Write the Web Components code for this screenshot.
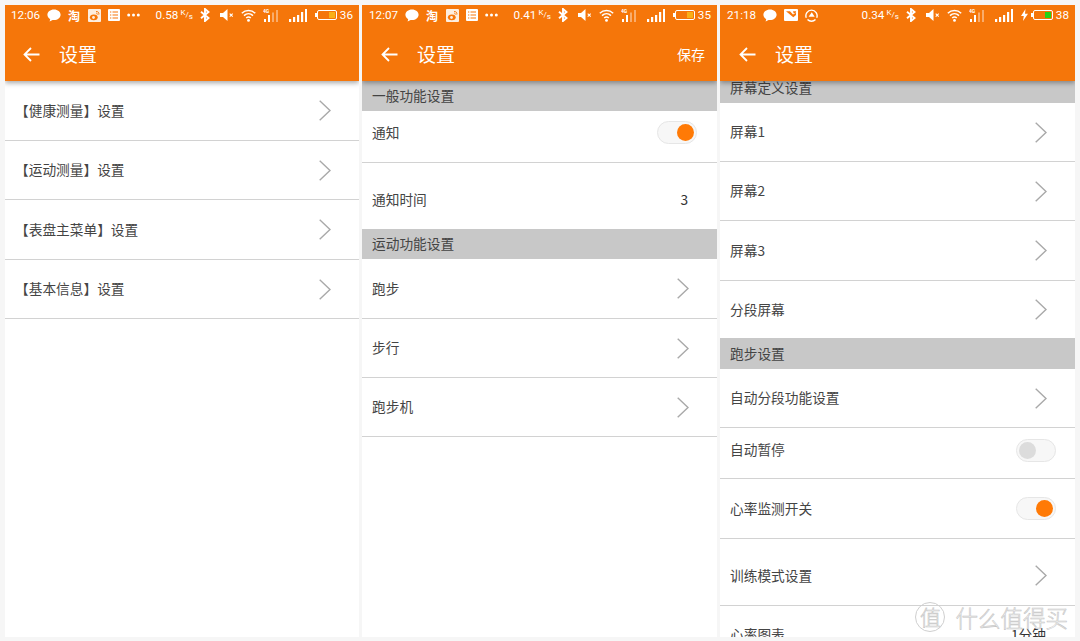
<!DOCTYPE html>
<html lang="zh">
<head>
<meta charset="utf-8">
<title>设置</title>
<style>
html, body { margin: 0; height: 100%; }
body {
  width: 1080px;
  height: 641px;
  overflow: hidden;
  background: #f6f6f6;
  font-family: "Noto Sans CJK SC", "Noto Sans", sans-serif;
}
.screens {
  display: grid;
  grid-template-columns: 354px 355px 355px;
  column-gap: 3px;
  padding: 5px 0 0 5px;
  height: 637px;
  box-sizing: border-box;
}
</style>
</head>
<body>
<div class="screens">
  <phone-screen>
    <status-bar slot="top" time="12:06" speed="0.58" level="36">
      <ic-bubble></ic-bubble><ic-tao></ic-tao><ic-weibo></ic-weibo><ic-list></ic-list><ic-dots></ic-dots>
    </status-bar>
    <app-bar slot="top"></app-bar>
    <setting-row h="60" line chevron>【健康测量】设置</setting-row>
    <setting-row h="59" line chevron>【运动测量】设置</setting-row>
    <setting-row h="60" line chevron>【表盘主菜单】设置</setting-row>
    <setting-row h="59" line chevron>【基本信息】设置</setting-row>
  </phone-screen>

  <phone-screen style="--inset:1px">
    <status-bar slot="top" time="12:07" speed="0.41" level="35">
      <ic-bubble></ic-bubble><ic-tao></ic-tao><ic-weibo></ic-weibo><ic-list></ic-list><ic-dots></ic-dots>
    </status-bar>
    <app-bar slot="top" action="保存"></app-bar>
    <section-head h="30">一般功能设置</section-head>
    <setting-row h="52" line shift="-4">通知<toggle-switch slot="end" on></toggle-switch></setting-row>
    <setting-row h="66" value="3" shift="3.5">通知时间</setting-row>
    <section-head h="30">运动功能设置</section-head>
    <setting-row h="60" line chevron>跑步</setting-row>
    <setting-row h="59" line chevron>步行</setting-row>
    <setting-row h="59" line chevron>跑步机</setting-row>
  </phone-screen>

  <phone-screen style="--inset:1px">
    <status-bar slot="top" time="21:18" speed="0.34" level="38" charging>
      <ic-bubble></ic-bubble><ic-photo></ic-photo><ic-ring></ic-ring>
    </status-bar>
    <app-bar slot="top"></app-bar>
    <section-head h="22" shift="-4">屏幕定义设置</section-head>
    <setting-row h="59" line chevron>屏幕1</setting-row>
    <setting-row h="59" line chevron>屏幕2</setting-row>
    <setting-row h="60" line chevron>屏幕3</setting-row>
    <setting-row h="57" chevron>分段屏幕</setting-row>
    <section-head h="31">跑步设置</section-head>
    <setting-row h="59" line chevron>自动分段功能设置</setting-row>
    <setting-row h="51" line shift="-3">自动暂停<toggle-switch slot="end" style="margin-right:-1px"></toggle-switch></setting-row>
    <setting-row h="60" line>心率监测开关<toggle-switch slot="end" on style="margin-right:-1px"></toggle-switch></setting-row>
    <setting-row h="67" line shift="3.5" chevron>训练模式设置</setting-row>
    <setting-row h="60" value="1分钟" shift="-1">心率图表</setting-row>
    <water-mark></water-mark>
  </phone-screen>
</div>

<script>
// small helper, every icon is just an svg inside a shadow root
function defineIcon(name, w, h, box, body) {
  customElements.define(name, class extends HTMLElement {
    constructor() {
      super();
      this.attachShadow({ mode: 'open' }).innerHTML =
        '<style>:host{display:block;width:' + w + 'px;height:' + h + 'px;flex:none}svg{display:block}</style>' +
        '<svg width="' + w + '" height="' + h + '" viewBox="' + box + '">' + body + '</svg>';
    }
  });
}

defineIcon('ic-bubble', 14, 13, '0 0 14 13',
  '<path d="M7 .5C3.300.5.400 2.800.400 5.800c0 1.800 1.100 3.400 2.800 4.400L2.600 12.600 5.600 11c.5.100.900.100 1.400.100 3.700 0 6.600-2.300 6.600-5.300S10.700.5 7 .5Z" fill="#fff"/>');
defineIcon('ic-weibo', 13, 13, '0 0 13 13',
  '<rect width="13" height="13" rx="1" fill="#fdeee0"/><ellipse cx="5.800" cy="8.300" rx="3.900" ry="2.900" fill="#f7770a"/><circle cx="5.500" cy="8.500" r="1.400" fill="#fdeee0"/><path d="M8 2.600c2-.4 3.300 1.100 2.800 3M8.300 4.300c.8-.1 1.200.5 1 1.200" fill="none" stroke="#f7770a" stroke-width="1"/>');
defineIcon('ic-list', 12, 12, '0 0 12 12',
  '<rect width="12" height="12" rx="1" fill="#fff"/><path d="M2 3h1.300M2 6h1.300M2 9h1.300M4.500 3H10M4.500 6H10M4.500 9H10" stroke="#f7770a" stroke-width="1.200"/>');
defineIcon('ic-dots', 13, 4, '0 0 13 4',
  '<circle cx="1.700" cy="2" r="1.500" fill="#fff"/><circle cx="6.500" cy="2" r="1.500" fill="#fff"/><circle cx="11.300" cy="2" r="1.500" fill="#fff"/>');
defineIcon('ic-photo', 14, 12, '0 0 14 12',
  '<rect width="14" height="12" rx="1" fill="#fff"/><path d="M2 2.200h4l3 3.300 3-1.700V6L9.300 8.300Z" fill="#f7770a"/><path d="M9 2.200h3v1.200L9.800 4.600Z" fill="#f7770a"/>');
defineIcon('ic-ring', 13, 13, '0 0 13 13',
  '<path d="M1.300 8.800A5.600 5.600 0 1 1 11.700 8.800M2.500 10.600A5.600 5.600 0 0 0 10.500 10.600" fill="none" stroke="#fff" stroke-width="1.400"/><path d="M6.800 3.200 9.700 7.800H3.600Z" fill="#fff"/>');
defineIcon('ic-bluetooth', 10, 14, '0 0 10 14',
  '<path d="M1 3.800 8.500 10 5 13V1l3.500 3L1 10.200" fill="none" stroke="#fff" stroke-width="1.900"/>');
defineIcon('ic-mute', 14, 12, '0 0 14 12',
  '<path d="M0 4h3L7.500 0v12L3 8H0Z" fill="#fff"/><path d="M9.700 4.700 12.700 7.700M12.700 4.700 9.700 7.700" stroke="#fff" stroke-width="1.100"/>');
defineIcon('ic-wifi', 15, 13, '0 0 15 13',
  '<path d="M.8 4.200C4.600.7 10.400.7 14.200 4.200M3 6.600C5.600 4.200 9.400 4.200 12 6.600M5.200 9C6.500 7.800 8.500 7.800 9.800 9" fill="none" stroke="#fff" stroke-width="1.500"/><circle cx="7.500" cy="11.400" r="1.400" fill="#fff"/>');
defineIcon('ic-signal-4g', 18, 14, '0 0 18 14',
  '<text x="0" y="4.500" font-size="5" font-family="Roboto" font-weight="700" fill="#fff">4G</text>' +
  '<path d="M1 14v-3h2v3ZM5 14V7h2v7Z" fill="#fff"/><path d="M9 14V4.500h2V14ZM13 14V2h2v12Z" fill="#fff" opacity=".4"/>');
defineIcon('ic-signal', 18, 13, '0 0 18 13',
  '<path d="M0 13v-3h2.200v3ZM4 13V8h2.200v5ZM8 13V6h2.200v7ZM12 13V3h2.200v10ZM16 13V0h2.200v13Z" fill="#fff"/>');
defineIcon('ic-bolt', 7, 12, '0 0 7 12',
  '<path d="M4.500 0 0 7h2.800L2 12l5-7.300H4Z" fill="#fff"/>');

const status_template = document.createElement('template');
status_template.innerHTML = `
<style>
:host {
  display: flex;
  align-items: center;
  height: 20px;
  padding: 0 6px 0 calc(6px + var(--inset, 0px));
  color: #fff;
  font: 11.7px Roboto, sans-serif;
  white-space: nowrap;
}
.left, .right { display: flex; align-items: center; }
.left { gap: 7px; }
.right { margin-left: auto; }
.unit { display: flex; font-size: 8px; line-height: 8px; margin: 0 7px 0 2px; }
.unit b { font-weight: 400; }
.unit b:first-child { position: relative; top: -2px; }
.unit b:last-child { position: relative; top: 2px; }
ic-bluetooth { margin-right: 10px; }
ic-mute { margin-right: 7px; }
ic-wifi { margin-right: 7px; }
ic-signal-4g { margin-right: 8px; }
ic-signal { margin-right: 8px; }
ic-bolt { margin-right: 3px; }
.battery {
  position: relative;
  width: 20px;
  height: 10px;
  border: 1px solid #fff;
  border-radius: 2px;
  box-sizing: border-box;
  margin: 0 3px 0 2px;
}
.battery::before {
  content: "";
  position: absolute;
  left: -3px;
  top: 2px;
  width: 2px;
  height: 4px;
  background: #fff;
}
.fill {
  position: absolute;
  right: 1px;
  top: 1px;
  bottom: 1px;
  width: 6px;
  background: #f9b017;
}
:host([charging]) .fill { background: #27d414; }
</style>
<div class="left">
  <span id="time"></span>
  <slot></slot>
</div>
<div class="right">
  <span id="speed"></span><span class="unit"><b>K</b><b>/</b><b>s</b></span>
  <ic-bluetooth></ic-bluetooth>
  <ic-mute></ic-mute>
  <ic-wifi></ic-wifi>
  <ic-signal-4g></ic-signal-4g>
  <ic-signal></ic-signal>
  <ic-bolt id="bolt"></ic-bolt>
  <span class="battery"><span class="fill"></span></span>
  <span id="level"></span>
</div>
`;
class StatusBar extends HTMLElement {
  constructor() {
    super();
    this.attachShadow({ mode: 'open' });
    this.shadowRoot.appendChild(status_template.content.cloneNode(true));
    this.shadowRoot.querySelector('#time').textContent = this.getAttribute('time');
    this.shadowRoot.querySelector('#speed').textContent = this.getAttribute('speed');
    this.shadowRoot.querySelector('#level').textContent = this.getAttribute('level');
    if (!this.hasAttribute('charging')) {
      this.shadowRoot.querySelector('#bolt').remove();
    }
  }
}
customElements.define('status-bar', StatusBar);

// the taobao mark is a character in the real bar too
customElements.define('ic-tao', class extends HTMLElement {
  constructor() {
    super();
    this.attachShadow({ mode: 'open' }).innerHTML =
      '<style>:host{display:block;width:13px;font:700 12px/13px "Noto Sans CJK SC",sans-serif;color:#fff}</style>淘';
  }
});

const appbar_template = document.createElement('template');
appbar_template.innerHTML = `
<style>
:host {
  display: flex;
  align-items: center;
  height: 56px;
  padding: 2px 12px 0 calc(18px + var(--inset, 0px));
  box-sizing: border-box;
  color: #fff;
}
svg { display: block; flex: none; }
h1 { margin: 0 0 0 19px; font: 400 19px/26px "Noto Sans CJK SC", sans-serif; }
#action { margin-left: auto; font-size: 14px; }
</style>
<svg width="17" height="15" viewBox="0 0 17 15"><path d="M16.500 7.500H1.500M8 1 1.500 7.500 8 14" fill="none" stroke="#fff" stroke-width="1.800"/></svg>
<h1>设置</h1>
<span id="action"></span>
`;
class AppBar extends HTMLElement {
  constructor() {
    super();
    this.attachShadow({ mode: 'open' });
    this.shadowRoot.appendChild(appbar_template.content.cloneNode(true));
    this.shadowRoot.querySelector('#action').textContent = this.getAttribute('action') || '';
  }
}
customElements.define('app-bar', AppBar);

const screen_template = document.createElement('template');
screen_template.innerHTML = `
<style>
:host {
  display: block;
  position: relative;
  background: #fff;
  overflow: hidden;
  font: 13.7px "Noto Sans CJK SC", sans-serif;
  color: #444;
}
.top {
  position: relative;
  z-index: 2;
  background: #f5760a;
  height: 76px;
  box-shadow: 0 2px 5px rgba(0,0,0,.35);
}
</style>
<div class="top"><slot name="top"></slot></div>
<div class="body"><slot></slot></div>
`;
class PhoneScreen extends HTMLElement {
  constructor() {
    super();
    this.attachShadow({ mode: 'open' });
    this.shadowRoot.appendChild(screen_template.content.cloneNode(true));
  }
}
customElements.define('phone-screen', PhoneScreen);

const head_template = document.createElement('template');
head_template.innerHTML = `
<style>
:host {
  display: flex;
  align-items: center;
  box-sizing: border-box;
  padding-left: 10px;
  background: #c8c8c8;
  color: #444;
  white-space: nowrap;
  overflow: hidden;
}
#label { margin-top: -2px; }
</style>
<span id="label"><slot></slot></span>
`;
class SectionHead extends HTMLElement {
  constructor() {
    super();
    this.attachShadow({ mode: 'open' });
    this.shadowRoot.appendChild(head_template.content.cloneNode(true));
    this.style.height = this.getAttribute('h') + 'px';
    const shift = this.getAttribute('shift');
    if (shift) {
      this.shadowRoot.querySelector('#label').style.marginTop = (shift * 2 - 2) + 'px';
    }
  }
}
customElements.define('section-head', SectionHead);

const row_template = document.createElement('template');
row_template.innerHTML = `
<style>
:host {
  display: flex;
  align-items: center;
  justify-content: space-between;
  box-sizing: border-box;
  padding: 0 20px 0 10px;
  color: #444;
  white-space: nowrap;
  overflow: hidden;
}
:host([line]) { border-bottom: 1px solid #d2d2d2; }
#label { margin-top: -2px; }
#value { margin: -2px 9px 0 0; color: #333; line-height: 14px; }
svg { display: block; margin-right: 8px; }
</style>
<span id="label"><slot></slot></span>
<slot name="end"></slot>
`;
class SettingRow extends HTMLElement {
  constructor() {
    super();
    this.attachShadow({ mode: 'open' });
    this.shadowRoot.appendChild(row_template.content.cloneNode(true));
    this.style.height = this.getAttribute('h') + 'px';
    const root = this.shadowRoot;
    const shift = Number(this.getAttribute('shift') || 0);
    if (shift > 0) this.style.paddingTop = (shift * 2) + 'px';
    if (shift < 0) this.style.paddingBottom = (-shift * 2) + 'px';
    if (this.hasAttribute('chevron')) {
      root.appendChild(document.createRange().createContextualFragment(
        '<svg width="12" height="21" viewBox="0 0 12 21"><path d="M.7.7 11 10.500.7 20.300" fill="none" stroke="#a9a9a9" stroke-width="1.400"/></svg>'));
    }
    if (this.getAttribute('value')) {
      const v = document.createElement('span');
      v.id = 'value';
      v.textContent = this.getAttribute('value');
      root.appendChild(v);
    }
  }
}
customElements.define('setting-row', SettingRow);

const toggle_template = document.createElement('template');
toggle_template.innerHTML = `
<style>
:host {
  display: block;
  position: relative;
  width: 40px;
  height: 23px;
  box-sizing: border-box;
  border: 1px solid #e6e6e6;
  border-radius: 12px;
  background: #f7f7f7;
  flex: none;
}
i {
  position: absolute;
  top: 2px;
  left: 2px;
  width: 17px;
  height: 17px;
  border-radius: 50%;
  background: #dcdcdc;
}
:host([on]) i { left: auto; right: 2px; background: #ff7a06; }
</style>
<i></i>
`;
class ToggleSwitch extends HTMLElement {
  constructor() {
    super();
    this.attachShadow({ mode: 'open' });
    this.shadowRoot.appendChild(toggle_template.content.cloneNode(true));
  }
}
customElements.define('toggle-switch', ToggleSwitch);

const mark_template = document.createElement('template');
mark_template.innerHTML = `
<style>
:host {
  position: absolute;
  right: 7px;
  bottom: 5px;
  display: flex;
  align-items: center;
  gap: 10px;
  color: #fff;
  -webkit-text-stroke: .6px #c4c4c4;
  font: 300 22.5px/22px "Noto Sans CJK SC", sans-serif;
  white-space: nowrap;
}
b {
  display: block;
  width: 30px;
  height: 30px;
  box-sizing: border-box;
  border: 1px solid #cfcfcf;
  border-radius: 50%;
  font-weight: 300;
  font-size: 21px;
  line-height: 27px;
  text-align: center;
}
</style>
<b>值</b><span>什么值得买</span>
`;
class WaterMark extends HTMLElement {
  constructor() {
    super();
    this.attachShadow({ mode: 'open' });
    this.shadowRoot.appendChild(mark_template.content.cloneNode(true));
  }
}
customElements.define('water-mark', WaterMark);
</script>
</body>
</html>
